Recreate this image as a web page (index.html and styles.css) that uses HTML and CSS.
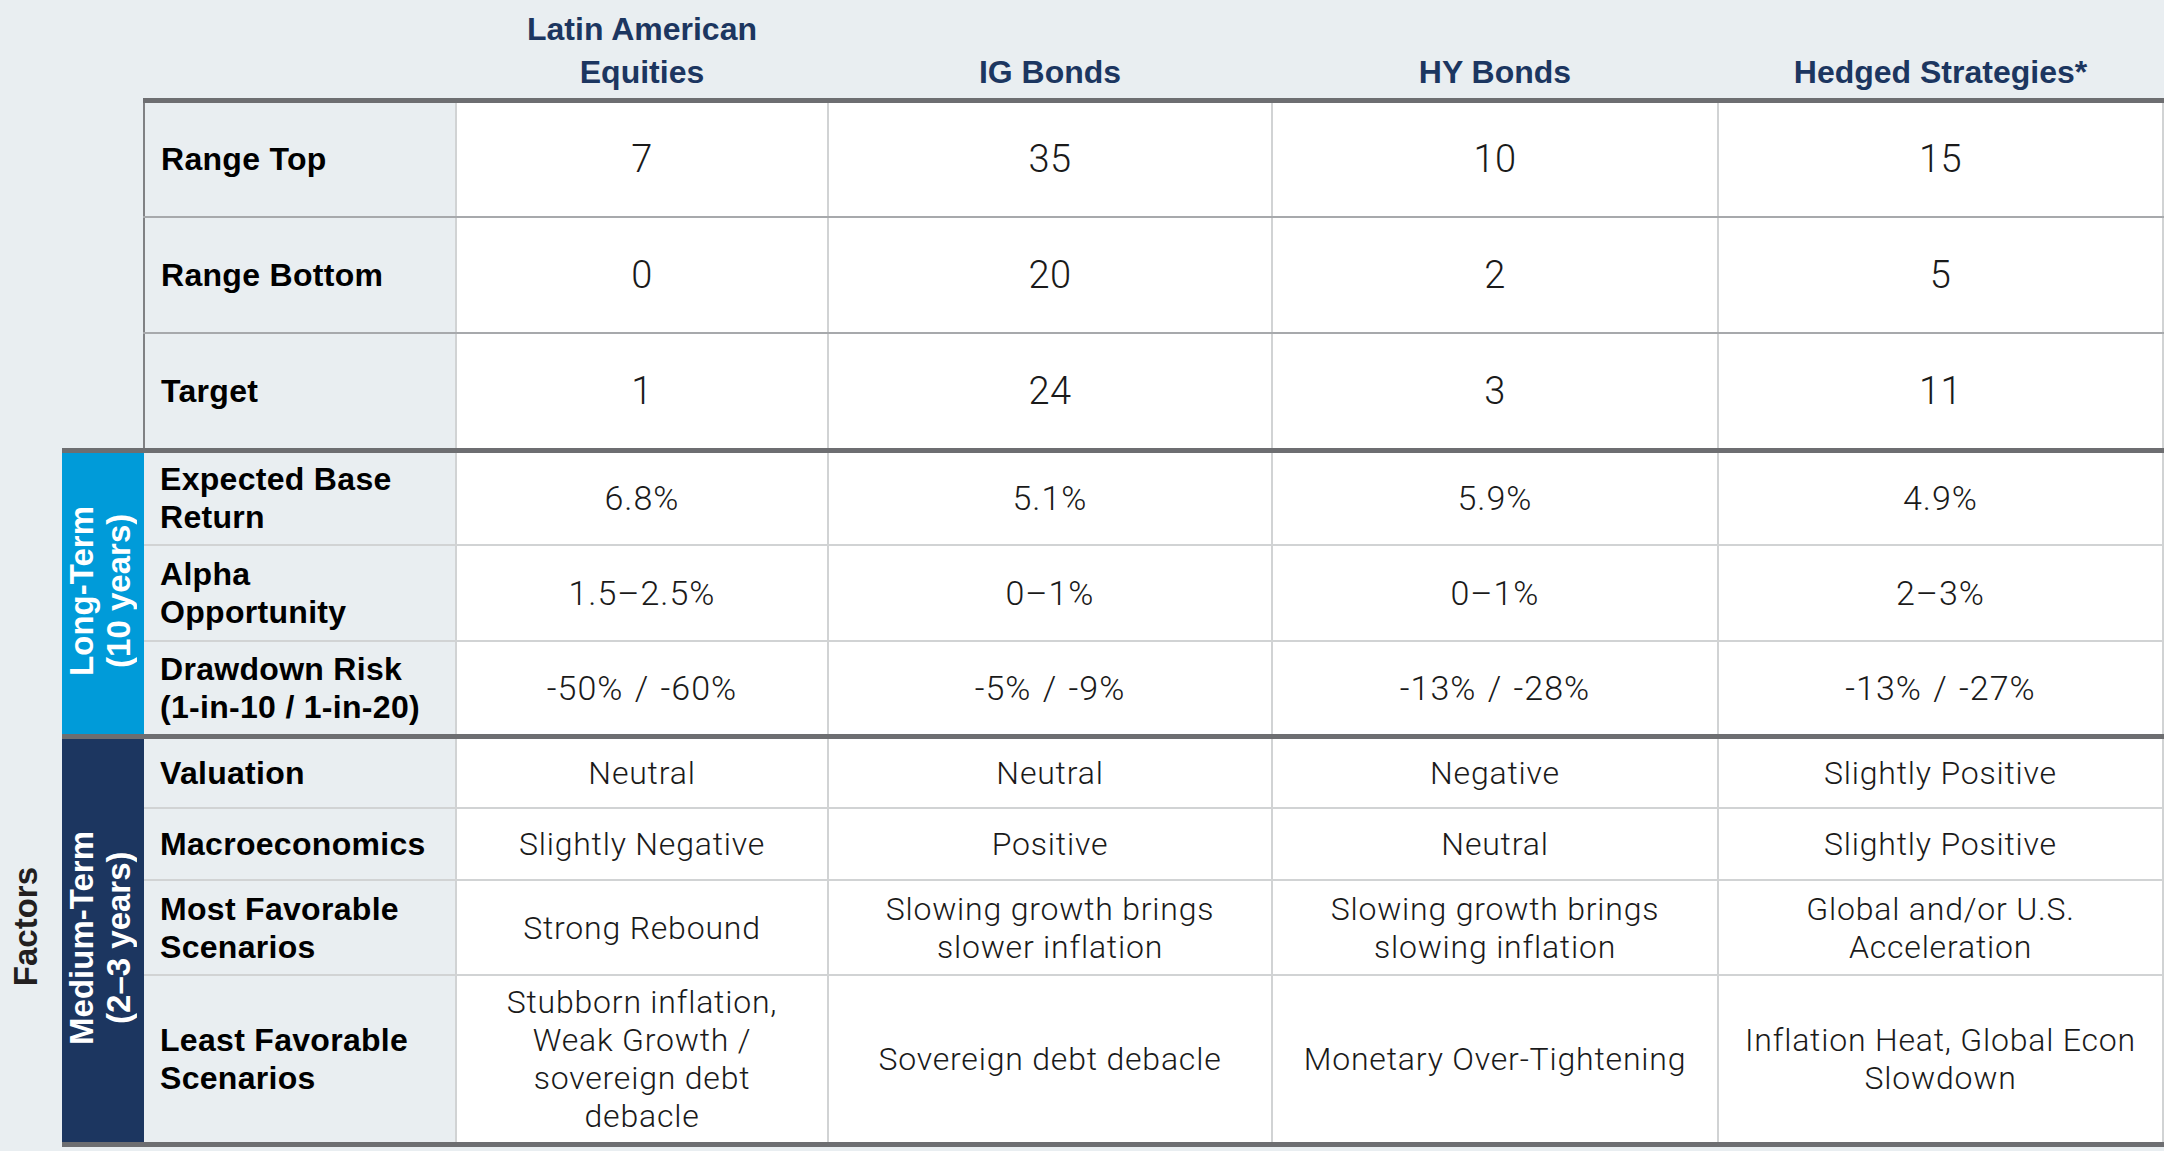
FILE: index.html
```html
<!DOCTYPE html>
<html>
<head>
<meta charset="utf-8">
<link rel="stylesheet" href="styles.css">
</head>
<body>
<table class="grid">
  <colgroup>
    <col class="c-fac"><col class="c-band"><col class="c-lbl"><col class="c-1"><col class="c-2"><col class="c-3"><col class="c-4">
  </colgroup>
  <tr class="head">
    <th class="blank"></th><th class="blank"></th><th class="hcol"></th>
    <th class="hcol">Latin American<br>Equities</th>
    <th class="hcol">IG Bonds</th>
    <th class="hcol">HY Bonds</th>
    <th class="hcol">Hedged Strategies*</th>
  </tr>
  <tr class="r-top1">
    <td class="blank"></td><td class="blank"></td>
    <td class="lbl tl">Range Top</td>
    <td class="val tv num">7</td><td class="val tv num">35</td><td class="val tv num">10</td><td class="val tv num">15</td>
  </tr>
  <tr class="r-top2">
    <td class="blank"></td><td class="blank"></td>
    <td class="lbl tl">Range Bottom</td>
    <td class="val tv num">0</td><td class="val tv num">20</td><td class="val tv num">2</td><td class="val tv num">5</td>
  </tr>
  <tr class="r-top3">
    <td class="blank"></td><td class="blank"></td>
    <td class="lbl tl">Target</td>
    <td class="val tv num">1</td><td class="val tv num">24</td><td class="val tv num">3</td><td class="val tv num">11</td>
  </tr>
  <tr class="r-lt1">
    <td class="blank" rowspan="3"></td>
    <td class="band lt thick" rowspan="3"><span class="vt">Long-Term<br>(10 years)</span></td>
    <td class="lbl thick">Expected Base<br>Return</td>
    <td class="val pct thick">6.8%</td><td class="val pct thick">5.1%</td><td class="val pct thick">5.9%</td><td class="val pct thick">4.9%</td>
  </tr>
  <tr class="r-lt2">
    <td class="lbl">Alpha<br>Opportunity</td>
    <td class="val pct">1.5–2.5%</td><td class="val pct">0–1%</td><td class="val pct">0–1%</td><td class="val pct">2–3%</td>
  </tr>
  <tr class="r-lt3">
    <td class="lbl">Drawdown Risk<br>(1-in-10 / 1-in-20)</td>
    <td class="val pct">-50% / -60%</td><td class="val pct">-5% / -9%</td><td class="val pct">-13% / -28%</td><td class="val pct">-13% / -27%</td>
  </tr>
  <tr class="r-mt1">
    <td class="fac" rowspan="4"><span class="vt">Factors</span></td>
    <td class="band mt thick bottom" rowspan="4"><span class="vt">Medium-Term<br>(2–3 years)</span></td>
    <td class="lbl thick">Valuation</td>
    <td class="val thick">Neutral</td><td class="val thick">Neutral</td><td class="val thick">Negative</td><td class="val thick">Slightly Positive</td>
  </tr>
  <tr class="r-mt2">
    <td class="lbl">Macroeconomics</td>
    <td class="val">Slightly Negative</td><td class="val">Positive</td><td class="val">Neutral</td><td class="val">Slightly Positive</td>
  </tr>
  <tr class="r-mt3">
    <td class="lbl">Most Favorable<br>Scenarios</td>
    <td class="val">Strong Rebound</td>
    <td class="val">Slowing growth brings<br>slower inflation</td>
    <td class="val">Slowing growth brings<br>slowing inflation</td>
    <td class="val">Global and/or U.S.<br>Acceleration</td>
  </tr>
  <tr class="r-mt4">
    <td class="lbl bottom">Least Favorable<br>Scenarios</td>
    <td class="val bottom">Stubborn inflation,<br>Weak Growth /<br>sovereign debt<br>debacle</td>
    <td class="val bottom">Sovereign debt debacle</td>
    <td class="val bottom">Monetary Over-Tightening</td>
    <td class="val bottom">Inflation Heat, Global Econ<br>Slowdown</td>
  </tr>
</table>
</body>
</html>
```

FILE: styles.css
```css
* { box-sizing: border-box; }
html, body { margin: 0; padding: 0; background: #e9eef1; }
body { width: 2164px; height: 1151px; overflow: hidden; }

.grid {
  border-collapse: collapse;
  table-layout: fixed;
  width: 2161px;
}
.blank, .hcol { padding: 0; }

.c-fac { width: 62px; }
.c-band { width: 82px; }
.c-lbl { width: 312px; }
.c-1 { width: 372px; }
.c-2 { width: 444px; }
.c-3 { width: 446px; }
.c-4 { width: 445px; }

.head th {
  height: 100px;
  vertical-align: bottom;
  text-align: center;
  font: 700 32px/43px "Liberation Sans", Arial, sans-serif;
  color: #1c3660;
  padding: 0 0 4px 0;
}
.head th.hcol { border-bottom: 5px solid #6d6e71; }

.r-top1 { height: 117px; }
.r-top2 { height: 116px; }
.r-top3 { height: 117px; }
.r-lt1 { height: 95px; }
.r-lt2 { height: 96px; }
.r-lt3 { height: 95px; }
.r-mt1 { height: 72px; }
.r-mt2 { height: 72px; }
.r-mt3 { height: 95px; }
.r-mt4 { height: 169px; }

.lbl {
  background: #e9eef1;
  font: 700 32px/38px "Liberation Sans", Arial, sans-serif;
  letter-spacing: 0.3px;
  color: #000;
  padding: 0 8px 0 16px;
  text-align: left;
  vertical-align: middle;
  border-right: 2px solid #d1d3d4;
  border-bottom: 2px solid #d1d3d4;
}
.lbl.tl { border-left: 2px solid #808184; border-bottom-color: #a7a9ac; }

.val {
  background: #fff;
  font: 300 32px/38px Roboto, "Open Sans", sans-serif;
  letter-spacing: 0.8px;
  color: #1a1a1a;
  text-align: center;
  vertical-align: middle;
  padding: 0 4px;
  border-left: 2px solid #d1d3d4;
  border-right: 2px solid #d1d3d4;
  border-bottom: 2px solid #d1d3d4;
}
.val.tv { border-bottom-color: #a7a9ac; }
.val.num { font-size: 38px; letter-spacing: 0.5px; }
.val.pct { font-size: 34px; letter-spacing: 1px; word-spacing: 2px; }

.thick { border-top: 5px solid #6d6e71; }
.bottom { border-bottom: 5px solid #6d6e71; }

.band {
  color: #fff;
  text-align: center;
  vertical-align: middle;
  padding: 0 6px 0 0;
}
.band.lt { background: #009bd9; }
.band.mt { background: #1c3660; }

.vt {
  display: inline-block;
  writing-mode: vertical-rl;
  transform: rotate(180deg);
  font: 700 33px/37px "Liberation Sans", Arial, sans-serif;
  white-space: nowrap;
  text-align: center;
}

.fac {
  vertical-align: middle;
  text-align: left;
  padding: 0 0 22px 7px;
  color: #231f20;
}
```
